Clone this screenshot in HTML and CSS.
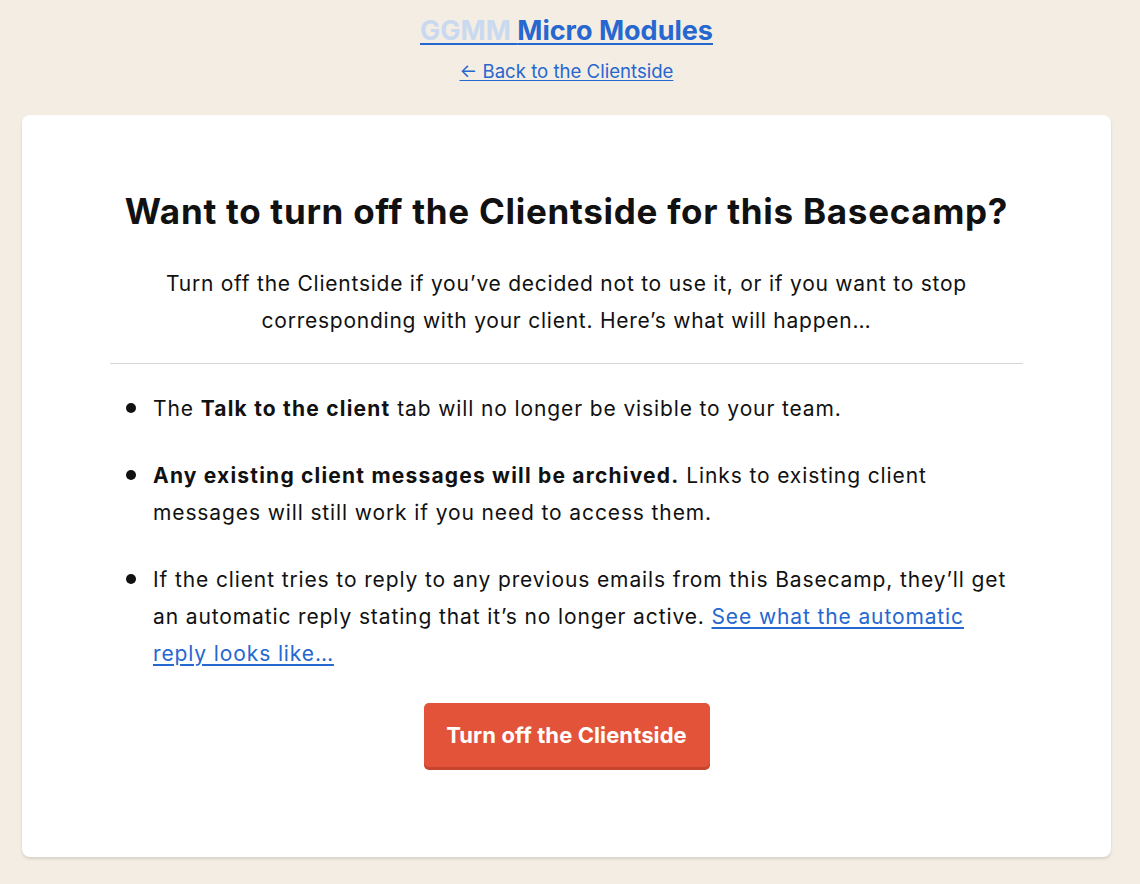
FILE: index.html
```html
<!DOCTYPE html>
<html>
<head>
<meta charset="utf-8">
<link rel="stylesheet" href="styles.css">
</head>
<body>
<header class="top">
  <a class="project" href="#"><span class="faded">GGMM </span>Micro Modules</a>
  <a class="back" href="#">← Back to the Clientside</a>
</header>
<main class="card">
  <h1 class="title">Want to turn off the Clientside for this Basecamp?</h1>
  <p class="intro">Turn off the Clientside if you’ve decided not to use it, or if you want to stop corresponding with your client. Here’s what will happen…</p>
  <hr class="rule">
  <ul class="list">
    <li>The <strong>Talk to the client</strong> tab will no longer be visible to your team.</li>
    <li><strong>Any existing client messages will be archived.</strong> Links to existing client messages will still work if you need to access them.</li>
    <li>If the client tries to reply to any previous emails from this Basecamp, they’ll get an automatic reply stating that it’s no longer active. <a href="#">See what the automatic reply looks like…</a></li>
  </ul>
  <div class="actions">
    <button class="btn">Turn off the Clientside</button>
  </div>
</main>
</body>
</html>
```
FILE: styles.css
```css
html, body {
  margin: 0;
  padding: 0;
  background: #f4ede3;
}
body {
  font-family: Inter, "Noto Sans", sans-serif;
  color: #111;
  padding: 14px 29px 26px 22px;
  box-sizing: border-box;
  min-height: 884px;
}
.top {
  display: flex;
  flex-direction: column;
  align-items: center;
  gap: 13px;
}
.project {
  font-size: 27px;
  font-weight: 700;
  color: #2667d0;
  text-decoration: underline;
  text-decoration-thickness: 2px;
  text-underline-offset: 3px;
  letter-spacing: 0;
}
.faded {
  color: #c9d9f0;
}
.back {
  font-size: 18.6px;
  color: #2667d0;
  text-decoration: underline;
  text-underline-offset: 2px;
}
.card {
  margin-top: 33px;
  background: #fff;
  border-radius: 8px;
  box-shadow: 0 2px 3px rgba(0,0,0,0.12);
  padding: 74px 88px 86px;
  height: 742px;
  box-sizing: border-box;
}
.title {
  margin: 0;
  text-align: center;
  font-size: 35px;
  font-weight: 700;
  letter-spacing: 0.72px;
  line-height: 44px;
}
.intro {
  margin: 32px auto 0;
  max-width: 830px;
  text-align: center;
  font-size: 21px;
  letter-spacing: 0.76px;
  line-height: 37px;
}
.rule {
  border: none;
  border-top: 1px solid #d6d6d6;
  margin: 24px 0 0;
}
.list {
  list-style: none;
  margin: 26px 0 0;
  padding: 0 8px 0 43px;
  font-size: 21px;
  letter-spacing: 0.88px;
  line-height: 37px;
  display: flex;
  flex-direction: column;
  gap: 30px;
}
.list li {
  position: relative;
}
.list li::before {
  content: "";
  position: absolute;
  left: -27px;
  top: 13px;
  width: 10px;
  height: 10px;
  border-radius: 50%;
  background: #111;
}
.list strong {
  letter-spacing: 1.2px;
}
.list a {
  color: #2667d0;
  text-decoration: underline;
  text-underline-offset: 3px;
}
.actions {
  display: flex;
  justify-content: center;
  margin-top: 31px;
}
.btn {
  font-family: Inter, "Noto Sans", sans-serif;
  font-size: 22px;
  font-weight: 700;
  color: #fff;
  background: #e2533a;
  border: none;
  border-radius: 5px;
  box-shadow: 0 3px 0 #c7442e;
  width: 286px;
  height: 64px;
  letter-spacing: 0.1px;
  cursor: pointer;
}
```
